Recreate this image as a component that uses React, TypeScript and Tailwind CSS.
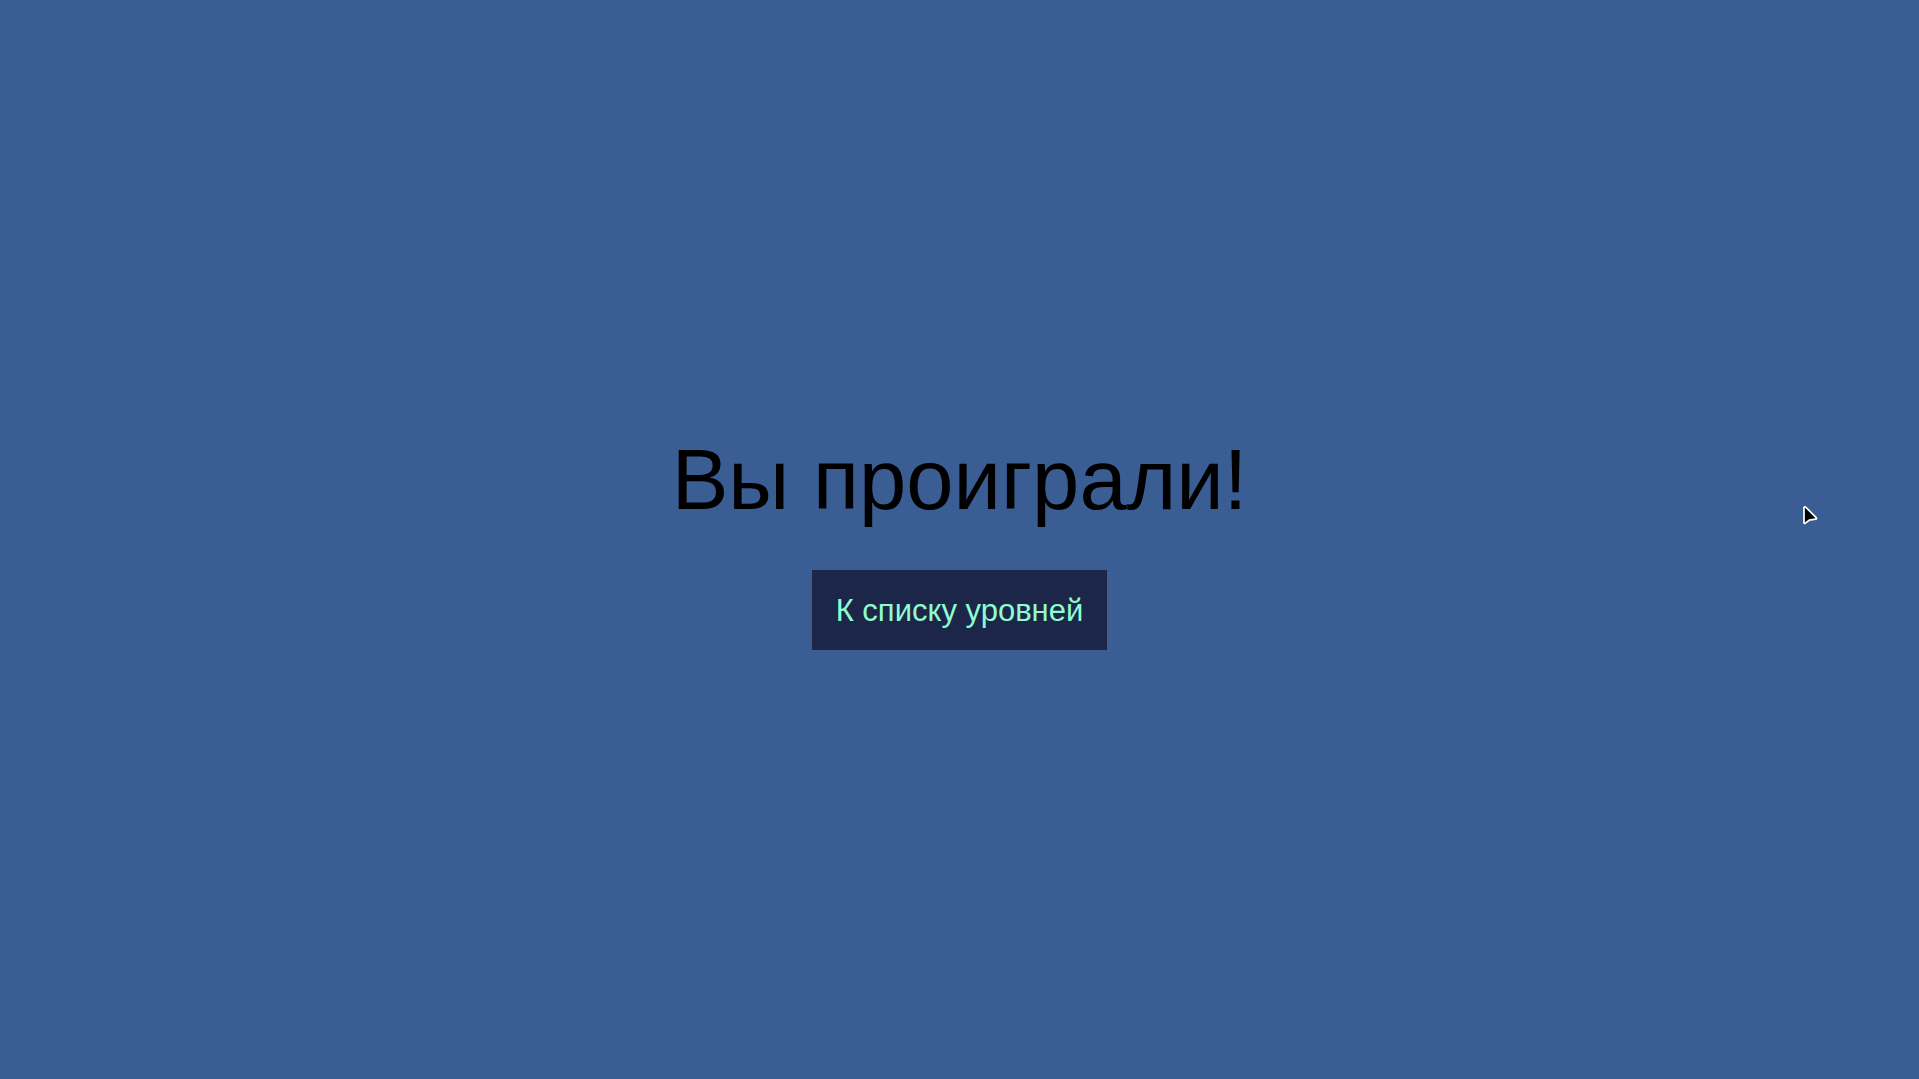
export default function App() {
  return (
    <main className="flex min-h-screen flex-col items-center justify-center gap-10 bg-[#3a5d93] font-['Liberation_Sans',Arial,sans-serif]">
      <h1 className="text-[85px] leading-[101px] text-black">Вы проиграли!</h1>
      <button type="button" className="h-20 cursor-pointer bg-[#1b2649] px-6 pt-0.5 text-[31px] leading-9 text-[#8ffbd0]">
        К списку уровней
      </button>
      <svg aria-hidden="true" className="pointer-events-none absolute top-[505px] left-[1802px] h-5 w-4" viewBox="0 0 16 20">
        <path d="M2 2.6V17.6Q2 18.8 3 18.4L7.2 15.2L13.6 14.2Q15 13.8 14.2 12.6L4 2.4Q2.4 1.2 2 2.6Z" fill="#000" stroke="#fff" strokeWidth="1.7" strokeLinejoin="round" />
      </svg>
    </main>
  );
}
